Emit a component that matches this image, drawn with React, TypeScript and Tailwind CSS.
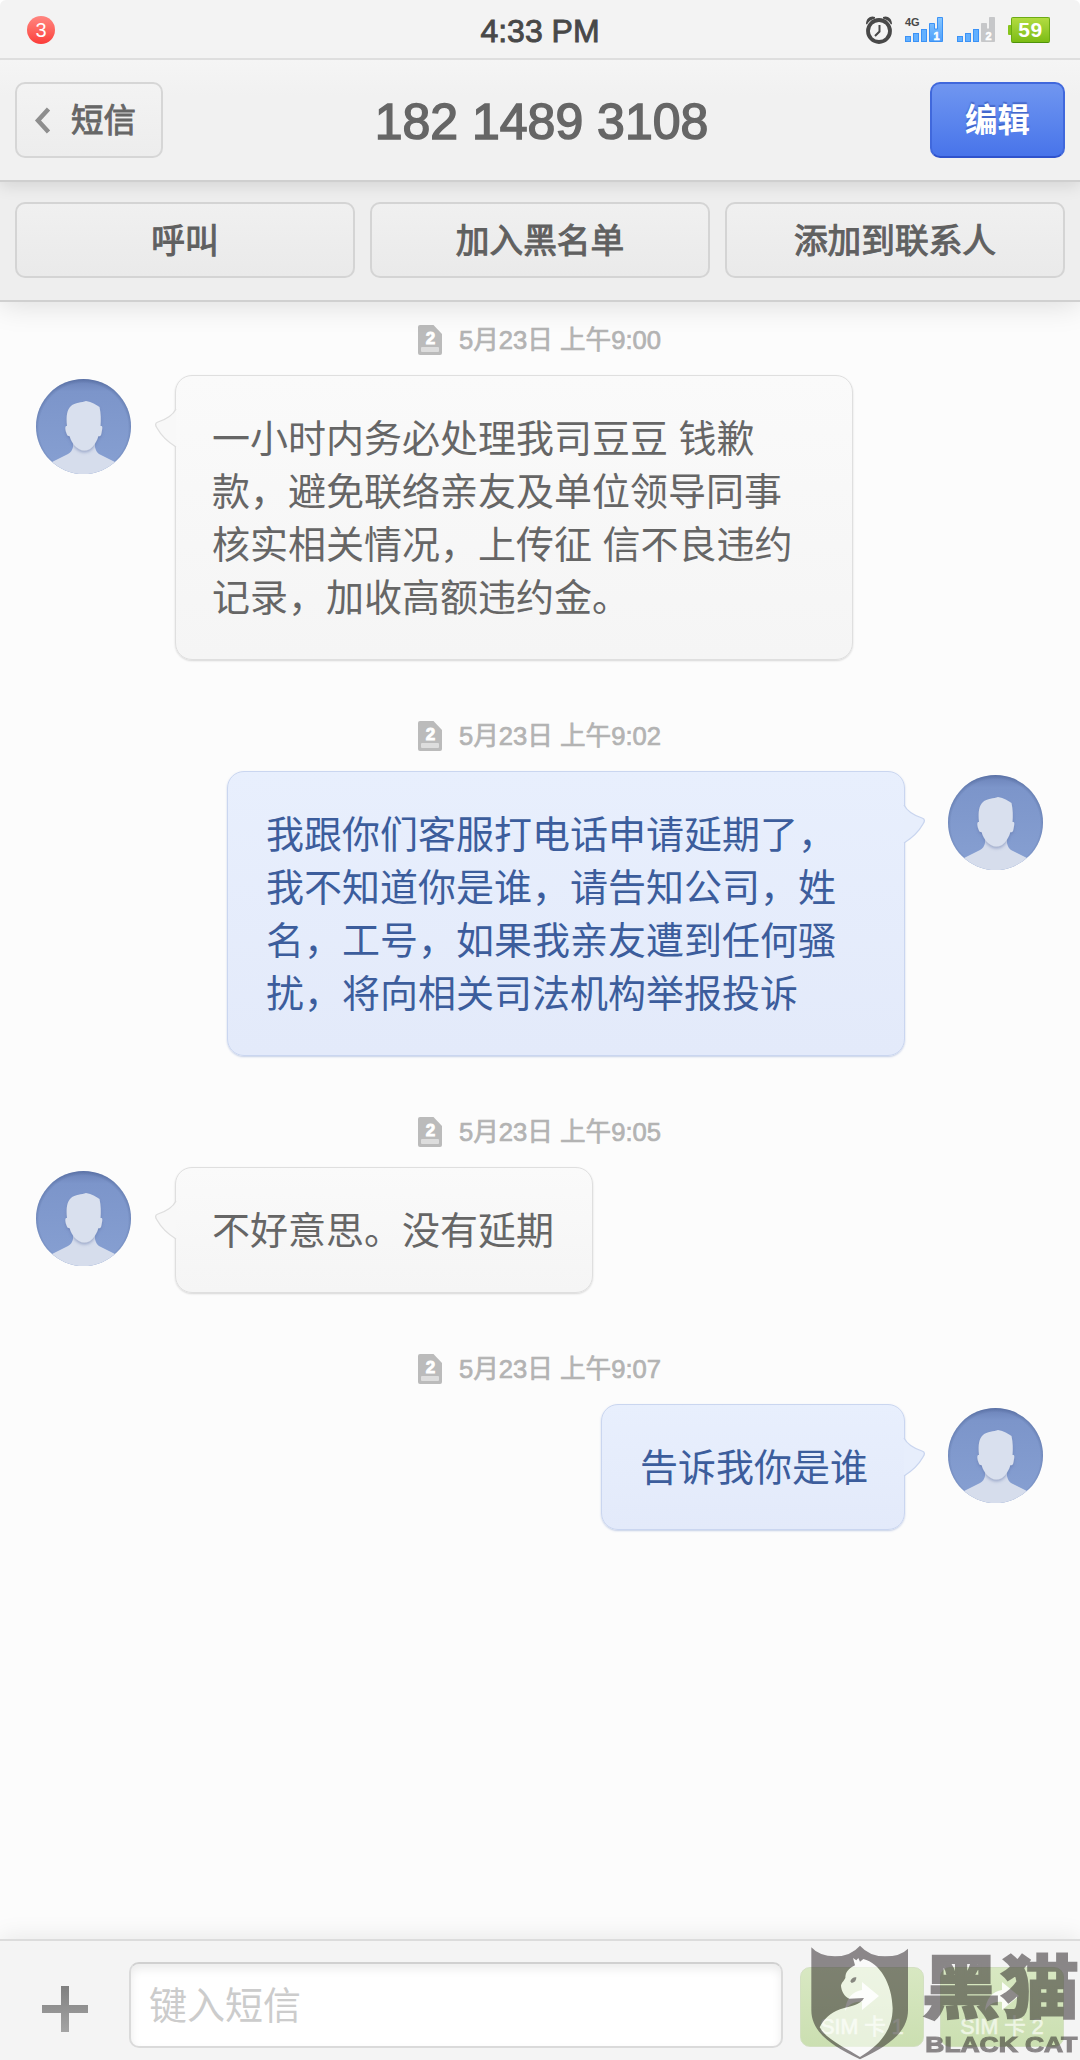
import React from 'react';

type Message = {
  time: string;
  sent: boolean;
  lines: string[];
};

const messages: Message[] = [
  {
    time: '5月23日 上午9:00',
    sent: false,
    lines: [
      '一小时内务必处理我司豆豆 钱歉',
      '款，避免联络亲友及单位领导同事',
      '核实相关情况，上传征 信不良违约',
      '记录，加收高额违约金。',
    ],
  },
  {
    time: '5月23日 上午9:02',
    sent: true,
    lines: [
      '我跟你们客服打电话申请延期了，',
      '我不知道你是谁，请告知公司，姓',
      '名，工号，如果我亲友遭到任何骚',
      '扰，将向相关司法机构举报投诉',
    ],
  },
  { time: '5月23日 上午9:05', sent: false, lines: ['不好意思。没有延期'] },
  { time: '5月23日 上午9:07', sent: true, lines: ['告诉我你是谁'] },
];

const AlarmIcon: React.FC = () => (
  <svg width="26" height="28" viewBox="0 0 26 28" fill="none">
    <path d="M0 8 C0 2 5 -1 9 1 L9 2.500 C5 3.500 2.500 5.500 1 8.500 Z" fill="#484848" />
    <path d="M26 8 C26 2 21 -1 17 1 L17 2.500 C21 3.500 23.500 5.500 25 8.500 Z" fill="#484848" />
    <circle cx="13" cy="15" r="11" stroke="#484848" strokeWidth="3.800" />
    <path d="M13.500 9 V15.500 L9 20" stroke="#484848" strokeWidth="2" />
  </svg>
);

const SignalIcon: React.FC<{ sim: number; full: boolean }> = ({ sim, full }) => (
  <svg width="39" height="28" viewBox="0 0 39 28">
    <defs>
      <linearGradient id={`signal${sim}`} x1="0" y1="0" x2="0" y2="1">
        <stop offset="0" stopColor={full ? '#86c6ff' : '#c6c7c9'} />
        <stop offset="1" stopColor={full ? '#4fa0fb' : '#c6c7c9'} />
      </linearGradient>
    </defs>
    <g fill="#62b0ff" stroke="#3b92f6" strokeWidth="1">
      <rect x="0.500" y="20.500" width="5" height="5" />
      <rect x="8.500" y="17.500" width="5" height="8" />
      <rect x="16.500" y="13.500" width="5" height="12" />
    </g>
    <path
      d="M24.500 7.500 H29.500 V13 H32.500 V1.500 H37.500 V25.500 H24.500 Z"
      fill={`url(#signal${sim})`}
      stroke={full ? '#3b92f6' : '#c6c7c9'}
    />
    <text
      x="31.500"
      y="24"
      textAnchor="middle"
      fontSize="11"
      fontWeight="bold"
      fontFamily="Liberation Sans, sans-serif"
      fill="#ffffff"
      stroke="#ffffff"
      strokeWidth="0.500"
    >
      {sim}
    </text>
  </svg>
);

const StatusBar: React.FC = () => (
  <div className="grid h-[60px] shrink-0 grid-cols-[1fr_auto_1fr] items-center border-b-2 border-[#dedede] bg-[#f3f3f3] pt-[2px]">
    <div className="ml-[27px] flex h-7 w-7 items-center justify-center rounded-full bg-gradient-to-b from-[#ff8580] to-[#fb3a38] text-[20px] leading-none text-white">
      3
    </div>
    <div className="pt-[2px] text-[32px] leading-none text-[#484848] [-webkit-text-stroke:0.9px_#484848]">4:33 PM</div>
    <div className="flex items-center justify-end pr-[30px]">
      <AlarmIcon />
      <div className="relative ml-[13px]">
        <SignalIcon sim={1} full />
        <span className="absolute top-[1px] left-[0px] text-[11px] leading-none font-bold text-[#484848]">4G</span>
      </div>
      <div className="ml-[13px]">
        <SignalIcon sim={2} full={false} />
      </div>
      <div className="ml-[12px] h-[10px] w-[3px] rounded-l-[1px] bg-[#86c41c]"></div>
      <div className="flex h-[26px] w-[39px] items-center justify-center rounded-[2px] border border-[#6cab14] border-b-[#4e9309] bg-gradient-to-b from-[#b2dc40] to-[#7cbc12] pb-[1px] text-[21px] leading-none font-bold tracking-[0.5px] text-white">
        59
      </div>
    </div>
  </div>
);

const Header: React.FC = () => (
  <div className="relative z-10 grid h-[122px] shrink-0 grid-cols-[1fr_auto_1fr] items-center border-b-2 border-[#cfcfcf] bg-gradient-to-b from-[#f5f5f5] via-[#f1f1f1] via-30% to-[#f1f1f1] px-[15px] shadow-[0_3px_16px_rgba(0,0,0,0.12)] [clip-path:inset(0_0_-40px_0)]">
    <div className="flex h-[76px] w-[148px] items-center rounded-[10px] border-2 border-[#d6d6d6] bg-gradient-to-b from-[#f3f3f3] to-[#ededed] pl-[17px] text-[32.500px] text-[#666] [-webkit-text-stroke:0.9px_#666]">
      <svg width="17" height="27" viewBox="0 0 17 27" fill="none" className="mr-[20px]">
        <path d="M14.500 2 L4 13.500 L14.500 25" stroke="#8e8e8e" strokeWidth="4.500" />
      </svg>
      <span className="pt-[2px] leading-none">短信</span>
    </div>
    <h1 className="pt-[3px] pl-[3px] text-[50px] leading-none text-[#666] [-webkit-text-stroke:1.500px_#666]">182 1489 3108</h1>
    <div className="flex h-[76px] w-[135px] items-center justify-center justify-self-end rounded-[10px] border-2 border-[#4068dc] border-b-[#2f52cc] bg-gradient-to-b from-[#7096f0] to-[#4874ea] pt-[2px] text-[32.500px] leading-none font-bold text-white [text-shadow:0_-2px_1px_rgba(40,70,170,0.5)]">
      编辑
    </div>
  </div>
);

const ActionBar: React.FC = () => (
  <div className="relative z-[5] flex h-[120px] shrink-0 items-start gap-[15px] border-b-2 border-[#d0d0d0] bg-[#eeeeee] px-[15px] pt-[20px] shadow-[0_3px_28px_rgba(0,0,0,0.13)] [clip-path:inset(0_0_-50px_0)]">
    {['呼叫', '加入黑名单', '添加到联系人'].map((label) => (
      <div
        key={label}
        className="flex h-[76px] flex-1 items-center justify-center rounded-[10px] border-2 border-[#d4d4d4] bg-gradient-to-b from-[#f0f0f0] to-[#eaeaea] pt-[3px] text-[33.700px] leading-none text-[#606060] [-webkit-text-stroke:1px_#606060]"
      >
        {label}
      </div>
    ))}
  </div>
);

const Avatar: React.FC = () => (
  <svg width="95" height="95" viewBox="0 0 95 95" className="mt-1 shrink-0">
    <defs>
      <clipPath id="avatarClip">
        <circle cx="47.500" cy="47.500" r="47.500" />
      </clipPath>
      <linearGradient id="avatarBg" x1="0" y1="0" x2="0" y2="1">
        <stop offset="0" stopColor="#6b82b8" />
        <stop offset="0.130" stopColor="#7c95ca" />
        <stop offset="1" stopColor="#87a0d2" />
      </linearGradient>
      <radialGradient id="avatarEdge">
        <stop offset="0.900" stopColor="#3f5586" stopOpacity="0" />
        <stop offset="1" stopColor="#3f5586" stopOpacity="0.450" />
      </radialGradient>
      <filter id="headShadow" x="-20%" y="-20%" width="140%" height="150%">
        <feDropShadow dx="0" dy="2" stdDeviation="1.500" floodColor="#5a6fa5" floodOpacity="0.450" />
      </filter>
    </defs>
    <g clipPath="url(#avatarClip)">
      <rect width="95" height="95" fill="url(#avatarBg)" />
      <circle cx="47.500" cy="49" r="49.500" fill="url(#avatarEdge)" />
      <path d="M37 62 V68 Q36 73 32 75 L14 84 V95 H81 V84 L63 75 Q60 73 59 68 V62 Z" fill="#d6ddec" />
      <path
        d="M31 47 C30 36 31 31 35 27 C39 23.500 46 23.500 50 22 C56 23 60 25.500 63.500 28 C65 35 65 41 64.500 47 C67 46.500 66.500 49 65.500 54 C65 57 64 57.500 62.500 57 C61 62 58 67 54 70 Q48 73 43 70 C38 67 35 62 33.500 57 C31 57.500 31 55 30 53 C29 49 29 46.500 31 47 Z"
        fill="#d9e0ee"
        filter="url(#headShadow)"
      />
    </g>
  </svg>
);

const Tail: React.FC<{ sent: boolean }> = ({ sent }) => (
  <svg
    width="23"
    height="42"
    viewBox="0 0 23 42"
    className={sent ? 'absolute top-[32px] right-[-22px] -scale-x-100' : 'absolute top-[32px] left-[-22px]'}
  >
    <path
      d="M22 1 C18 9 10 12 4 14 C1 15 1 17 3 20 C8 29 14 34 22 39"
      fill={sent ? '#e7eefc' : '#f8f8f8'}
      stroke={sent ? '#c9d5ef' : '#dedede'}
      strokeWidth="1.300"
    />
  </svg>
);

const SimBadge: React.FC = () => (
  <svg width="25" height="30" viewBox="0 0 25 30">
    <path d="M2 0 H15.500 L24 9 V28 Q24 30 22 30 H2 Q0 30 0 28 V2 Q0 0 2 0 Z" fill="#bbbbbb" />
    <rect x="3" y="22" width="18" height="5" rx="1" fill="#dddddd" />
    <text
      x="12.500"
      y="18.500"
      textAnchor="middle"
      fontSize="17"
      fontWeight="bold"
      fontFamily="Liberation Sans, sans-serif"
      fill="#fff"
      stroke="#fff"
      strokeWidth="0.900"
    >
      2
    </text>
  </svg>
);

const MessageItem: React.FC<{ message: Message }> = ({ message }) => {
  const { sent, time, lines } = message;

  return (
    <div className="mb-[61px]">
      <div className="mb-5 flex h-[30px] items-center pl-[418px]">
        <SimBadge />
        <span className="ml-[16px] pt-[2px] text-[25.600px] leading-none whitespace-pre text-[#b3b3b3] [-webkit-text-stroke:0.7px_#b3b3b3]">
          {time}
        </span>
      </div>
      <div className={sent ? 'flex flex-row-reverse items-start gap-[43px] pr-[37px]' : 'flex items-start gap-[44px] pl-[36px]'}>
        <Avatar />
        <div
          className={
            sent
              ? 'relative rounded-[17px] border border-[#cad6f0] bg-gradient-to-b from-[#e8effd] to-[#e3eafa] pt-[37px] pr-[36px] pb-[34px] pl-[38px] text-[#3c5d9c] shadow-[0_1px_2px_rgba(90,120,190,0.35)]'
              : 'relative rounded-[17px] border border-[#dfdfdf] bg-gradient-to-b from-[#fafafa] to-[#f5f5f5] pt-[37px] pr-[38px] pb-[34px] pl-[36px] text-[#666] shadow-[0_1px_2px_rgba(0,0,0,0.15)]'
          }
        >
          <Tail sent={sent} />
          <div className={lines.length > 1 ? 'w-[602px]' : ''}>
            {lines.map((line) => (
              <p key={line} className="text-[38px] leading-[53px] whitespace-nowrap">
                {line}
              </p>
            ))}
          </div>
        </div>
      </div>
    </div>
  );
};

const SendButton: React.FC<{ label: string }> = ({ label }) => (
  <div className="flex h-[80px] w-[124px] flex-col items-center rounded-[10px] border border-[#d3e0c2] bg-gradient-to-b from-[#d8e8c2] to-[#cbdfb1] pt-[14px] text-[#eef5e4]">
    <svg width="36" height="30" viewBox="0 0 36 30">
      <path d="M18 0 L35 14 L18 28 V20 C10 19 4 23 1 29 C2 16 9 9 18 8 Z" fill="#fbfdf8" />
    </svg>
    <span className="mt-[3px] text-[21.500px] leading-[24px] whitespace-pre [-webkit-text-stroke:0.6px_#eef5e4]">{label}</span>
  </div>
);

const Composer: React.FC = () => (
  <div className="relative z-10 flex h-[121px] shrink-0 items-start border-t-2 border-[#dcdcdc] bg-[#f4f4f4] pt-[21px] pl-[42px] shadow-[0_-3px_22px_rgba(0,0,0,0.08)]">
    <svg width="46" height="46" viewBox="0 0 46 46" className="mt-[24px]">
      <defs>
        <linearGradient id="plus" x1="0" y1="0" x2="0" y2="1">
          <stop offset="0" stopColor="#808080" />
          <stop offset="1" stopColor="#a4a4a4" />
        </linearGradient>
      </defs>
      <path d="M19 0 H27 V19 H46 V27 H27 V46 H19 V27 H0 V19 H19 Z" fill="url(#plus)" />
    </svg>
    <div className="ml-[41px] flex h-[86px] w-[654px] items-center rounded-[10px] border-2 border-[#dadada] border-t-[#d0d0d0] bg-white pt-[2px] pl-[18px] text-[38px] leading-none text-[#cccccc] shadow-[inset_0_5px_10px_rgba(0,0,0,0.08)]">
      键入短信
    </div>
    <div className="mt-[5px] ml-[17px] flex gap-[16px]">
      <SendButton label="SIM 卡 1" />
      <SendButton label="SIM 卡 2" />
    </div>
  </div>
);

// Translucent brand stamp lying over the bottom right corner
const Watermark: React.FC = () => (
  <svg width="300" height="140" viewBox="0 0 900 420" className="absolute right-0 bottom-0 z-20">
    <path
      d="M219 114 L225 136 C205 145 196 158 196 174 C190 185 183 190 183 198 C184 212 192 230 208 236 L252 234 C240 256 215 256 180 268 C150 278 130 300 119 322 C140 360 200 385 240 411 C300 375 338 330 338 265 C336 190 300 130 250 117 L240 125 L235 114 L229 121 Z"
      fill="#ffffff"
      fillOpacity="0.550"
    />
    <g fill="#211a1d" fillOpacity="0.500">
      <path
        fillRule="evenodd"
        d="M94 82 Q118 109 165 109 Q212 109 240 77 Q268 109 315 109 Q362 109 384 86 V270 C384 335 330 375 240 418 C150 375 94 335 94 270 Z M219 114 L225 136 C205 145 196 158 196 174 C190 185 183 190 183 198 C184 212 192 230 208 236 L252 234 C240 256 215 256 180 268 C150 278 130 300 119 322 C140 360 200 385 240 411 C300 375 338 330 338 265 C336 190 300 130 250 117 L240 125 L235 114 L229 121 Z"
      />
      <path d="M211 184 Q217 170 229 172 Q229 187 215 189 Z" />
    </g>
    <g fill="#211a1d" stroke="#211a1d" opacity="0.500">
      <text
        x="425"
        y="280"
        fontSize="228"
        fontWeight="bold"
        fontFamily="Noto Sans CJK SC, sans-serif"
        textLength="473"
        lengthAdjust="spacingAndGlyphs"
        strokeWidth="8"
        transform="translate(0 24) scale(1 0.910)"
      >
        黑猫
      </text>
      <text
        x="436"
        y="397"
        fontSize="68"
        fontWeight="bold"
        fontFamily="Liberation Sans, sans-serif"
        textLength="456"
        lengthAdjust="spacingAndGlyphs"
        strokeWidth="3.500"
      >
        BLACK CAT
      </text>
    </g>
  </svg>
);

const App: React.FC = () => {
  return (
    <div className="relative flex h-[2060px] w-[1080px] flex-col overflow-hidden rounded-t-[6px] bg-[#fcfcfc] font-['Liberation_Sans','Noto_Sans_CJK_SC',sans-serif]">
      <StatusBar />
      <Header />
      <ActionBar />
      <div className="flex-1 pt-[23px]">
        {messages.map((message) => (
          <MessageItem key={message.time} message={message} />
        ))}
      </div>
      <Composer />
      <Watermark />
    </div>
  );
};

export default App;
